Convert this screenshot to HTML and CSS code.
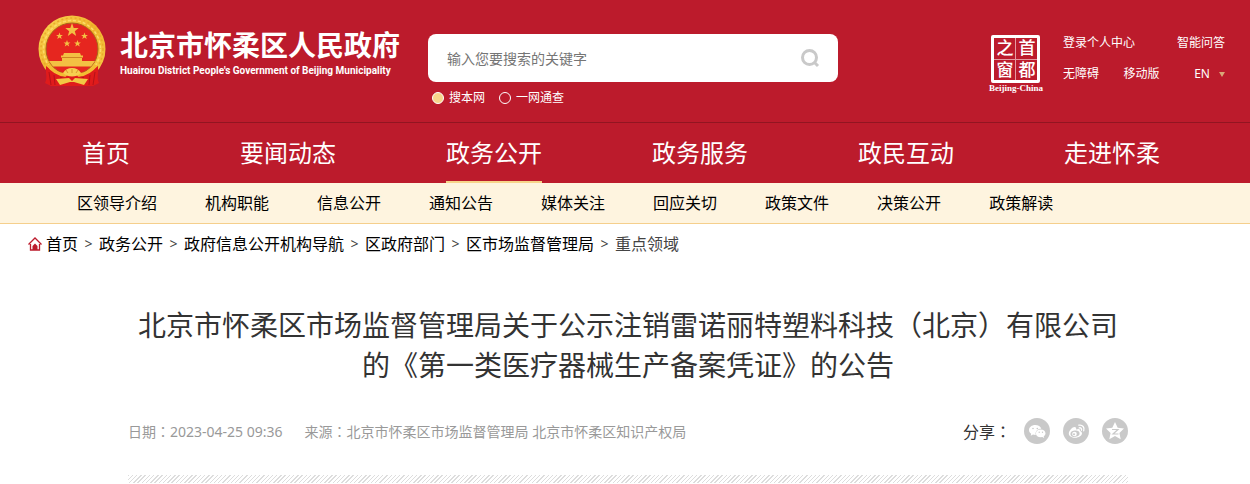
FILE: index.html
```html
<!DOCTYPE html>
<html lang="zh-CN">
<head>
    <meta charset="UTF-8">
    <meta name="viewport" content="width=device-width, initial-scale=1.0">
    <title>北京市怀柔区人民政府</title>
    <link rel="stylesheet" href="styles.css">
</head>
<body>
    <header class="header">
        <a class="logo" href="#">
            <svg class="emblem" viewBox="0 0 68 72" aria-hidden="true">
                <defs>
                    <linearGradient id="gold" x1="0" y1="0" x2="1" y2="1">
                        <stop offset="0" stop-color="#fbd655"/>
                        <stop offset=".5" stop-color="#f0b32b"/>
                        <stop offset="1" stop-color="#f7cd4b"/>
                    </linearGradient>
                </defs>
                <circle cx="34" cy="34" r="33.500" fill="url(#gold)"/>
                <circle cx="34" cy="34" r="31" fill="none" stroke="#e8aa2b" stroke-width="1.500" stroke-dasharray="2 2.500"/>
                <circle cx="34" cy="34" r="28.500" fill="none" stroke="#fbdc68" stroke-width="1.500" stroke-dasharray="3 2"/>
                <circle cx="34" cy="34" r="26" fill="#e6261f" stroke="#a8651b" stroke-width="1"/>
                <g fill="#f3c043">
                    <path d="M34 8 L35.700 13 L40.700 13 L36.800 16.200 L38.200 21 L34 18 L29.800 21 L31.200 16.200 L27.300 13 L32.300 13 Z"/>
                    <path d="M21.500 17.500 l.9 2.400 h2.500 l-2 1.700 .8 2.500 -2.200 -1.500 -2.200 1.500 .8 -2.500 -2 -1.700 h2.500 Z"/>
                    <path d="M46.500 17.500 l.9 2.400 h2.500 l-2 1.700 .8 2.500 -2.200 -1.500 -2.200 1.500 .8 -2.500 -2 -1.700 h2.500 Z"/>
                    <path d="M29 25 l.9 2.400 h2.500 l-2 1.700 .8 2.500 -2.200 -1.500 -2.200 1.500 .8 -2.500 -2 -1.700 h2.500 Z"/>
                    <path d="M39.500 25 l.9 2.400 h2.500 l-2 1.700 .8 2.500 -2.200 -1.500 -2.200 1.500 .8 -2.500 -2 -1.700 h2.500 Z"/>
                    <path d="M26 38 h16 l1 2.500 h-18 Z M23 40.500 h22 v2 h-22 Z M24 42.500 h20 v3.500 h-20 Z"/>
                    <path d="M11 46 h46 l-4 5.500 h-38 Z"/>
                </g>
                <path d="M24 42.500 h20" stroke="#c5751b" stroke-width=".8"/>
                <path d="M8 51 Q18 59 27 60 L41 60 Q50 59 60 51 L60 58 Q59 64 61 68 L55 71 H13 L7 68 Q9 64 8 58 Z" fill="#e01b1b"/>
                <path d="M11 57 L13 70 M16 60 L17 70 M57 57 L55 70 M52 60 L51 70 M22 63 L26 61 M46 63 L42 61" stroke="#b51218" stroke-width="1"/>
                <path d="M10 50 Q17 59 27 60 Q34 51 41 60 Q51 59 58 50" fill="none" stroke="#f3bb33" stroke-width="3.500"/>
                <path d="M25 58 Q28 53 34 53 Q40 53 43 58 Q39 61.500 34 61.500 Q29 61.500 25 58 Z" fill="#f6cf50"/>
                <path d="M30 58 l-2 -3 M34 58 v-4 M38 58 l2 -3" stroke="#d08a22" stroke-width=".8"/>
                <path d="M18 64 L31 63 L34 66 L37 63 L50 64 L46 70 L36 67 L32 67 L22 70 Z" fill="#f1c844"/>
            </svg>
            <span class="logo-text">
                <strong class="logo-cn">北京市怀柔区人民政府</strong>
                <span class="logo-en">Huairou District People's Government of Beijing Municipality</span>
            </span>
        </a>

        <form class="search">
            <div class="search-box">
                <input class="search-input" type="text" placeholder="输入您要搜索的关键字" aria-label="搜索关键字">
                <button class="search-btn" type="button" aria-label="搜索">
                    <svg width="20" height="20" viewBox="0 0 20 20">
                        <circle cx="9.500" cy="9.500" r="7" fill="none" stroke="#c9c9c9" stroke-width="3"/>
                        <path d="M14.500 14.500 L18 18" stroke="#c9c9c9" stroke-width="3"/>
                    </svg>
                </button>
            </div>
            <div class="search-scope">
                <label class="scope"><input type="radio" name="scope" checked>搜本网</label>
                <label class="scope"><input type="radio" name="scope">一网通查</label>
            </div>
        </form>

        <div class="tools">
            <a class="capital" href="#">
                <span class="seal"><span>之</span><span>首</span><span>窗</span><span>都</span></span>
                <span class="capital-en">Beijing-China</span>
            </a>
            <div class="tool-links">
                <div class="tool-row">
                    <a href="#">登录个人中心</a>
                    <a href="#">智能问答</a>
                </div>
                <div class="tool-row">
                    <a href="#">无障碍</a>
                    <a href="#">移动版</a>
                    <button class="lang" type="button">EN<span class="arrow"></span></button>
                </div>
            </div>
        </div>
    </header>

    <nav class="nav">
        <a href="#">首页</a>
        <a href="#">要闻动态</a>
        <a class="active" href="#">政务公开</a>
        <a href="#">政务服务</a>
        <a href="#">政民互动</a>
        <a href="#">走进怀柔</a>
    </nav>

    <nav class="subnav">
        <a href="#">区领导介绍</a>
        <a href="#">机构职能</a>
        <a href="#">信息公开</a>
        <a href="#">通知公告</a>
        <a href="#">媒体关注</a>
        <a href="#">回应关切</a>
        <a href="#">政策文件</a>
        <a href="#">决策公开</a>
        <a href="#">政策解读</a>
    </nav>

    <div class="crumbs">
        <svg class="home" width="14" height="14" viewBox="0 0 14 14" aria-hidden="true">
            <path d="M.500 7.500 L7 1 L13.500 7.500 M2.500 7 V13 H11.500 V7" fill="none" stroke="#bc1b2c" stroke-width="1.300"/>
            <path d="M4.500 13 V9 L7 6.500 L9.500 9 V13 Z" fill="#bc1b2c"/>
        </svg>
        <a href="#">首页</a><span class="sep">&gt;</span>
        <a href="#">政务公开</a><span class="sep">&gt;</span>
        <a href="#">政府信息公开机构导航</a><span class="sep">&gt;</span>
        <a href="#">区政府部门</a><span class="sep">&gt;</span>
        <a href="#">区市场监督管理局</a><span class="sep">&gt;</span>
        <span class="current">重点领域</span>
    </div>

    <main class="main">
        <article class="article">
            <h1>北京市怀柔区市场监督管理局关于公示注销雷诺丽特塑料科技（北京）有限公司的《第一类医疗器械生产备案凭证》的公告</h1>
            <div class="meta">
                <span>日期<span class="mid" lang="zh-TW">：</span>2023-04-25 09:36</span>
                <span>来源<span class="mid" lang="zh-TW">：</span>北京市怀柔区市场监督管理局 北京市怀柔区知识产权局</span>
                <div class="share">
                    <span class="share-label">分享<span class="mid" lang="zh-TW">：</span></span>
                    <a href="#" aria-label="微信">
                        <svg viewBox="0 0 26 26">
                            <path d="M11.200 7 C7.800 7 5 9.200 5 12 C5 13.600 5.900 14.900 7.200 15.800 L6.700 17.700 L9 16.600 Q10.500 17 11.700 16.900 C11 13.500 13.500 10.800 17.300 10.800 C16.700 8.600 14.200 7 11.200 7 Z"/>
                            <path d="M16.700 11.500 C14 11.500 11.900 13.200 11.900 15.400 C11.900 17.600 14 19.300 16.700 19.300 L18.300 19 L20.200 20 L19.700 18.300 C20.800 17.600 21.500 16.500 21.500 15.400 C21.500 13.200 19.400 11.500 16.700 11.500 Z"/>
                            <g fill="#c9c9c9"><circle cx="9" cy="10.500" r=".8"/><circle cx="13.300" cy="10.500" r=".8"/><circle cx="15.200" cy="14.300" r=".7"/><circle cx="18.500" cy="14.300" r=".7"/></g>
                        </svg>
                    </a>
                    <a href="#" aria-label="微博">
                        <svg viewBox="0 0 26 26">
                            <path d="M11.500 9 C9.500 9 5.800 12.700 5.800 15.500 C5.800 18 8.700 19.800 12 19.800 C16 19.800 19 17.600 19 15.300 C19 13.900 18 13.200 16.900 12.900 C17.500 11.300 16 10.300 13 11.600 C13.500 10 13 9 11.500 9 Z"/>
                            <ellipse cx="12" cy="15.700" rx="4.600" ry="3.200" fill="#c9c9c9" transform="rotate(-8 12 15.700)"/>
                            <circle cx="11.500" cy="16" r="2.300"/>
                            <circle cx="11" cy="16.300" r="1" fill="#c9c9c9"/>
                            <path d="M15.800 7.200 C19.500 6.400 22 9.500 20.700 12.800 M16.200 9.800 C18 9.500 19 10.800 18.400 12.300" fill="none" stroke="#fff" stroke-width="1.300" stroke-linecap="round"/>
                        </svg>
                    </a>
                    <a href="#" aria-label="QQ空间">
                        <svg viewBox="0 0 26 26">
                            <path d="M13 4 L15.700 9.800 L22 10.500 L17.400 14.900 L18.700 21.300 L13 18.100 L7.300 21.300 L8.600 14.900 L4 10.500 L10.300 9.800 Z"/>
                            <path d="M10 11.500 H16 L11 16 H16.500" fill="none" stroke="#c9c9c9" stroke-width="1.200"/>
                        </svg>
                    </a>
                </div>
            </div>
            <div class="stripe"></div>
        </article>
    </main>
</body>
</html>
```

FILE: styles.css
```css
* {
    box-sizing: border-box;
}

body {
    margin: 0;
    font-family: "Noto Sans", "Noto Sans CJK SC", sans-serif;
    font-size: 16px;
    color: #333;
    background-color: #fff;
}

a {
    color: inherit;
    text-decoration: none;
}

button,
input {
    font-family: inherit;
}

button {
    padding: 0;
    border: none;
    background: none;
    cursor: pointer;
}

/* punctuation set in the middle of its square */
.mid {
    font-family: "Noto Sans CJK TC", sans-serif;
}

/* header */
.header {
    display: flex;
    align-items: flex-start;
    min-height: 122px;
    padding: 0 22px 0 38px;
    color: #fff;
    background-color: #bc1b2c;
}

.logo {
    display: flex;
    flex: none;
    gap: 14px;
    padding-top: 15px;
}

.emblem {
    width: 68px;
    height: 72px;
}

.logo-text {
    padding-top: 14px;
    white-space: nowrap;
}

.logo-cn {
    display: block;
    font-size: 28px;
    line-height: 32px;
    font-weight: 700;
}

.logo-en {
    display: block;
    font-family: Roboto, "Liberation Sans", sans-serif;
    font-size: 10px;
    line-height: 20px;
    font-weight: 700;
}

.search {
    width: 410px;
    margin: 34px 20px 0 28px;
}

.search-box {
    display: flex;
    align-items: center;
    height: 48px;
    padding: 0 18px 0 19px;
    border-radius: 8px;
    background-color: #fff;
}

.search-input {
    flex: 1;
    min-width: 0;
    height: 40px;
    padding: 0;
    border: none;
    outline: none;
    font-size: 14px;
    color: #333;
}

.search-input::placeholder {
    color: #757575;
}

.search-btn {
    height: 20px;
}

.search-scope {
    display: flex;
    gap: 14px;
    padding: 6px 0 0 4px;
}

.scope {
    display: flex;
    align-items: center;
    gap: 5px;
    font-size: 12px;
    line-height: 20px;
}

.scope input {
    appearance: none;
    width: 12px;
    height: 12px;
    margin: 0;
    border: 1px solid #fff;
    border-radius: 50%;
}

.scope input:checked {
    background-color: #f7d58b;
}

.tools {
    display: flex;
    flex: none;
    gap: 20px;
    margin-left: auto;
    padding-top: 35px;
}

.capital {
    display: flex;
    flex-direction: column;
    align-items: center;
}

.seal {
    display: grid;
    grid-template-columns: 1fr 1fr;
    gap: 1px;
    width: 49px;
    height: 48px;
    border: 3px solid #fff;
    border-radius: 2px;
    background-color: #e59aa1;
    font-size: 17px;
    line-height: 20px;
    font-weight: 500;
    text-align: center;
}

.seal span {
    background-color: #bc1b2c;
}

.capital-en {
    font-family: "Liberation Serif", serif;
    font-size: 9px;
    line-height: 10px;
    font-weight: 700;
}

.tool-links {
    width: 165px;
    font-size: 12px;
    line-height: 16px;
}

.tool-row {
    display: flex;
    justify-content: space-between;
    padding-right: 3px;
    margin-bottom: 15px;
}

.lang {
    display: flex;
    align-items: center;
    gap: 9px;
    margin-left: 10px;
    font-size: 12px;
    line-height: 16px;
    color: #fff;
}

.arrow {
    border: 3px solid transparent;
    border-top: 5px solid #d9a878;
    border-bottom: none;
}

/* navigation */
.nav {
    display: flex;
    justify-content: space-between;
    padding: 0 90px 0 82px;
    border-top: 1px solid #921521;
    font-size: 24px;
    line-height: 60px;
    color: #fff;
    background-color: #bc1b2c;
}

.nav a {
    height: 60px;
}

.nav .active {
    border-bottom: 2px solid #f7d58b;
}

.subnav {
    display: flex;
    gap: 48px;
    padding: 0 77px;
    border-bottom: 1px solid #f5cf8c;
    font-size: 16px;
    line-height: 40px;
    color: #000;
    background-color: #fef4df;
}

.crumbs {
    display: flex;
    align-items: center;
    padding: 0 28px;
    line-height: 40px;
    color: #000;
}

.home {
    margin-right: 4px;
}

.sep {
    width: 21px;
    text-align: center;
    font-size: 14px;
    color: #444;
}

.current {
    color: #444;
}

/* article */
.main {
    padding: 41px 22px 0 28px;
}

.article {
    max-width: 1000px;
    margin: 0 auto;
}

h1 {
    margin: 0;
    font-size: 28px;
    line-height: 40px;
    font-weight: 400;
    text-align: center;
}

.meta {
    display: flex;
    align-items: center;
    gap: 22px;
    margin-top: 33px;
    font-size: 14px;
    line-height: 24px;
    color: #999;
}

.share {
    display: flex;
    align-items: center;
    gap: 13px;
    margin-left: auto;
}

.share-label {
    font-size: 16px;
    color: #333;
}

.share a {
    width: 26px;
    height: 26px;
    border-radius: 50%;
    background-color: #c9c9c9;
}

.share svg {
    display: block;
    fill: #fff;
}

.stripe {
    height: 8px;
    margin-top: 31px;
    background: repeating-linear-gradient(135deg, #ddd 0 1px, #fff 1px 3px);
}
```
